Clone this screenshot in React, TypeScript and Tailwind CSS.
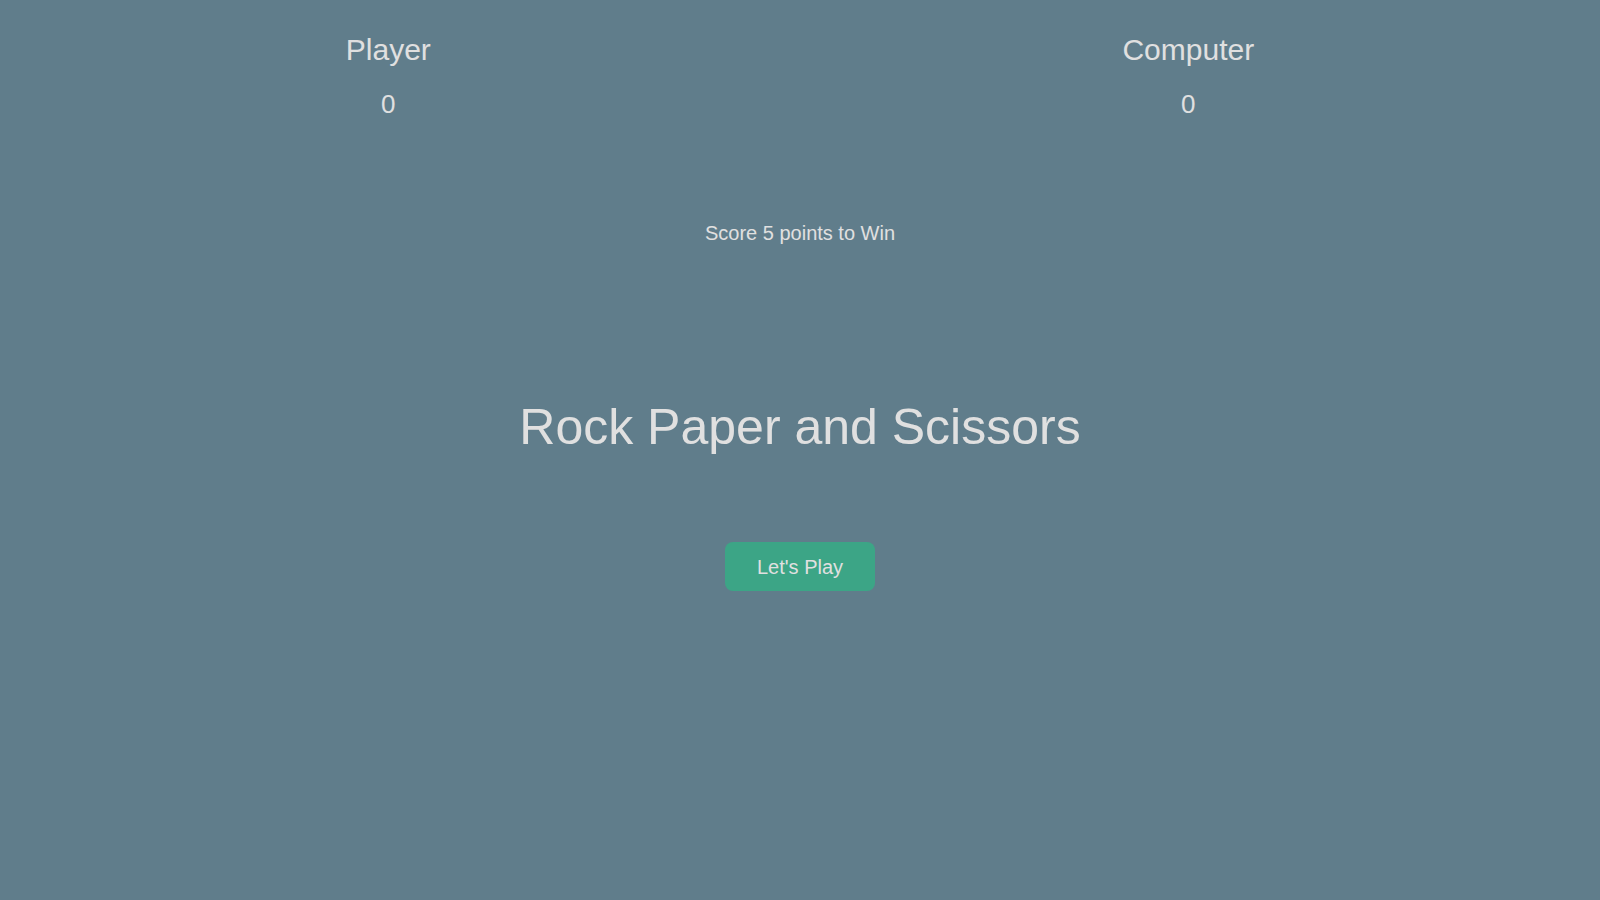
export default function App() {
  return (
    <div className="min-h-screen w-full bg-[#607d8b] font-['Liberation_Sans',Arial,sans-serif] text-[#e0e0e0]">
      <div className="flex justify-around pt-[33px]">
        <div className="text-center">
          <h2 className="text-[30px] leading-[34px]">Player</h2>
          <p className="mt-[22px] text-[26px] leading-[30px]">0</p>
        </div>
        <div className="text-center">
          <h2 className="text-[30px] leading-[34px]">Computer</h2>
          <p className="mt-[22px] text-[26px] leading-[30px]">0</p>
        </div>
      </div>
      <div className="flex flex-col items-center">
        <p className="mt-[102px] text-[20px] leading-[24px]">Score 5 points to Win</p>
        <h1 className="mt-[153px] text-[50px] leading-[58px]">Rock Paper and Scissors</h1>
        <button className="mt-[86px] h-[49px] rounded-lg bg-[#3ca586] px-8 text-[20px] text-[#e0e0e0]">
          Let's Play
        </button>
      </div>
    </div>
  )
}
